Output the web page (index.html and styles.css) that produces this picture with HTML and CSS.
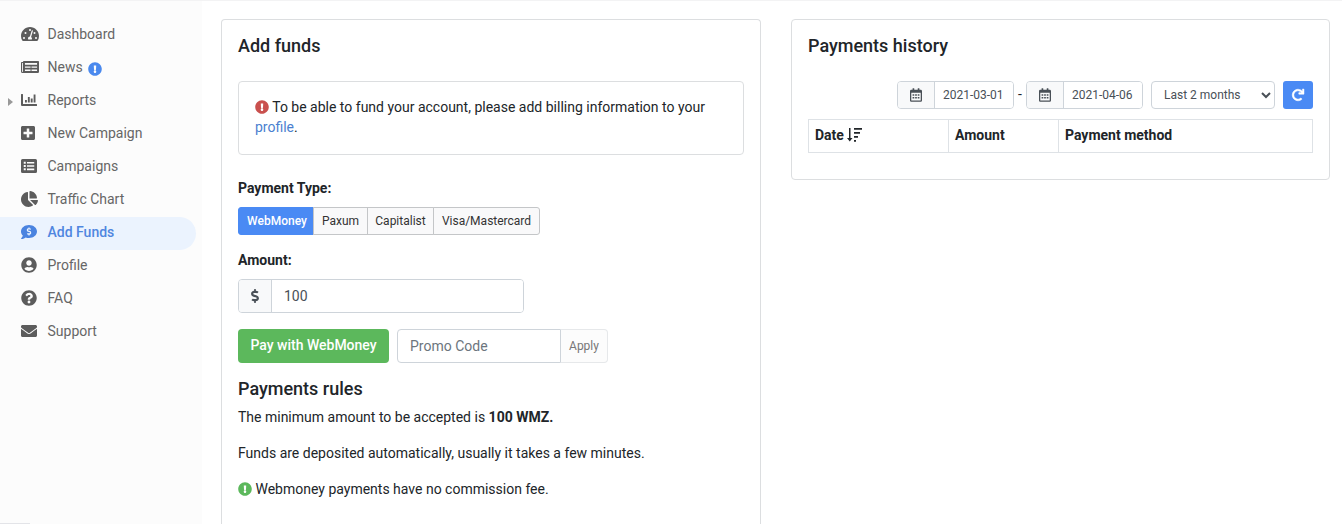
FILE: index.html
```html
<!DOCTYPE html>
<html lang="en">

<head>
    <meta charset="UTF-8">
    <meta name="viewport" content="width=device-width, initial-scale=1.0">
    <title>Add funds</title>
    <link rel="stylesheet" href="styles.css">
</head>

<body>

    <!-- Icons shared by several blocks -->
    <svg class="sprite" xmlns="http://www.w3.org/2000/svg">
        <symbol id="exclamation" viewBox="0 0 512 512">
            <path d="M504 256c0 136.997-111.043 248-248 248S8 392.997 8 256C8 119.083 119.043 8 256 8s248 111.083 248 248zm-248 50c-25.405 0-46 20.595-46 46s20.595 46 46 46 46-20.595 46-46-20.595-46-46-46zm-43.673-165.346l7.418 136c.347 6.364 5.609 11.346 11.982 11.346h48.546c6.373 0 11.635-4.982 11.982-11.346l7.418-136c.375-6.874-5.098-12.654-11.982-12.654h-63.383c-6.884 0-12.356 5.78-11.981 12.654z" />
        </symbol>
        <symbol id="calendar" viewBox="0 0 448 512">
            <path fill-rule="evenodd" d="M96 12q0-12 12-12h40q12 0 12 12v52h128V12q0-12 12-12h40q12 0 12 12v52h48q48 0 48 48v352q0 48-48 48H48q-48 0-48-48V112q0-48 48-48h48zM48 172v286q0 6 6 6h340q6 0 6-6V172zM96 232h64v56H96zm96 0h64v56h-64zm96 0h64v56h-64zM96 328h64v56H96zm96 0h64v56h-64zm96 0h64v56h-64z" />
        </symbol>
        <symbol id="dollar" viewBox="0 0 288 512">
            <path d="M209.2 233.4l-108-31.6C88.7 198.2 80 186.5 80 173.5c0-16.3 13.2-29.5 29.5-29.5h66.3c12.2 0 24.2 3.7 34.2 10.5 6.1 4.1 14.3 3.1 19.5-2l34.8-34c7.1-6.9 6.1-18.4-1.8-24.5C238 74.8 207.4 64.1 176 64V16c0-8.8-7.2-16-16-16h-32c-8.8 0-16 7.2-16 16v48h-2.5C45.8 64-5.4 118.7.5 183.6c4.2 46.1 39.4 83.6 83.8 96.6l102.5 30c12.5 3.7 21.2 15.3 21.2 28.3 0 16.3-13.2 29.5-29.5 29.5h-66.3C100 368 88 364.3 78 357.5c-6.1-4.1-14.3-3.1-19.5 2l-34.8 34c-7.1 6.9-6.1 18.4 1.8 24.5 24.5 19.2 55.1 29.9 86.5 30v48c0 8.8 7.2 16 16 16h32c8.8 0 16-7.2 16-16v-48.2c46.6-.9 90.3-28.6 105.7-72.7 21.5-61.6-14.6-124.8-72.5-141.7z" />
        </symbol>
    </svg>

    <div class="page">
        <nav class="sidebar">
            <a class="nav-item" href="#">
                <svg class="nav-icon w18" viewBox="0 0 576 512"><path fill-rule="evenodd" d="M288 32C129 32 0 161 0 320c0 53 14 102 39 145 6 9 16 15 27 15h444c11 0 21-6 27-15 25-43 39-92 39-145C576 161 447 32 288 32zM288 96a32 32 0 1 1 0 64a32 32 0 0 1 0-64zM96 352a32 32 0 1 1 0 64a32 32 0 0 1 0-64zM144 192a32 32 0 1 1 0 64a32 32 0 0 1 0-64zM480 352a32 32 0 1 1 0 64a32 32 0 0 1 0-64zM432 192a32 32 0 1 1 0 64a32 32 0 0 1 0-64zM367 137q18 5 14 23l-59 188q30 18 30 52 0 18-9 32H233q-9-14-9-32c0-34 27-63 61-64l56-181q6-22 26-18z" /></svg>
                <span>Dashboard</span>
            </a>
            <a class="nav-item" href="#">
                <svg class="nav-icon w18" viewBox="0 0 576 512"><path fill-rule="evenodd" d="M552 64H88q-24 0-24 32H24q-24 0-24 24v280q0 48 48 48h488q40 0 40-40V88q0-24-24-24zM34 128h28v272q0 14-14 14t-14-14zM126 128h388v56H126zM126 240h180v40H126zM336 240h178v40H336zM126 336h180v44H126zM336 336h178v44H336z" /></svg>
                <span>News</span>
                <svg class="news-badge"><use href="#exclamation" /></svg>
            </a>
            <a class="nav-item has-children" href="#">
                <svg class="nav-icon" viewBox="0 0 512 512"><path d="M16 64h32q16 0 16 16v304h432q16 0 16 16v32q0 16-16 16H32q-32 0-32-32V80q0-16 16-16zM128 256h60v80h-60zM220 160h60v176h-60zM312 208h60v128h-60zM404 80h60v256h-60z" /></svg>
                <span>Reports</span>
            </a>
            <a class="nav-item" href="#">
                <svg class="nav-icon w14" viewBox="0 0 448 512"><path d="M400 32H48C21.5 32 0 53.5 0 80v352c0 26.5 21.5 48 48 48h352c26.5 0 48-21.5 48-48V80c0-26.5-21.5-48-48-48zm-32 252c0 6.6-5.4 12-12 12h-92v92c0 6.6-5.4 12-12 12h-56c-6.6 0-12-5.4-12-12v-92H92c-6.6 0-12-5.4-12-12v-56c0-6.6 5.4-12 12-12h92v-92c0-6.6 5.4-12 12-12h56c6.6 0 12 5.4 12 12v92h92c6.6 0 12 5.4 12 12v56z" /></svg>
                <span>New Campaign</span>
            </a>
            <a class="nav-item" href="#">
                <svg class="nav-icon" viewBox="0 0 512 512"><path fill-rule="evenodd" d="M48 32h416q48 0 48 48v352q0 48-48 48H48q-48 0-48-48V80q0-48 48-48zM88 120v64h64v-64zM192 124v52h232v-52zM88 224v64h64v-64zM192 230v52h232v-52zM88 328v64h64v-64zM192 336v52h232v-52z" /></svg>
                <span>Campaigns</span>
            </a>
            <a class="nav-item" href="#">
                <svg class="nav-icon w17" viewBox="0 0 544 512"><path d="M527.79 288H290.5l158.03 158.03c6.04 6.04 15.98 6.53 22.19.68 38.7-36.46 65.32-85.61 73.13-140.86 1.34-9.46-6.51-17.85-16.06-17.85zm-15.83-64.8C503.72 103.74 408.26 8.28 288.8.04 279.68-.59 272 7.1 272 16.24V240h223.77c9.14 0 16.82-7.68 16.19-16.8zM224 288V50.71c0-9.55-8.39-17.4-17.84-16.06C86.99 51.49-4.1 155.6.14 280.37 4.5 408.51 114.83 513.59 243.03 511.98c50.4-.63 96.97-16.87 135.26-44.03 7.9-5.6 8.42-17.23 1.57-24.08L224 288z" /></svg>
                <span>Traffic Chart</span>
            </a>
            <a class="nav-item active" href="#">
                <svg class="nav-icon" viewBox="0 0 512 512">
                    <path d="M256 32C114.6 32 0 125.1 0 240c0 49.6 21.4 95 57 130.7C44.5 421.1 2.7 466 2.2 466.5c-2.2 2.3-2.8 5.7-1.5 8.7S4.8 480 8 480c66.3 0 116-31.8 140.6-51.4 32.7 12.3 69 19.4 107.4 19.4 141.4 0 256-93.1 256-208S397.4 32 256 32z" />
                    <use class="cutout" href="#dollar" x="176" y="104" width="160" height="270" />
                </svg>
                <span>Add Funds</span>
            </a>
            <a class="nav-item" href="#">
                <svg class="nav-icon" viewBox="0 0 496 512"><path d="M248 8C111 8 0 119 0 256s111 248 248 248 248-111 248-248S385 8 248 8zm0 96c48.6 0 88 39.4 88 88s-39.4 88-88 88-88-39.4-88-88 39.4-88 88-88zm0 344c-58.7 0-111.3-26.6-146.5-68.2 18.8-35.4 55.6-59.8 98.5-59.8 2.4 0 4.8.4 7.1 1.1 13 4.2 26.6 6.9 40.9 6.9 14.3 0 28-2.7 40.9-6.9 2.3-.7 4.7-1.1 7.1-1.1 42.9 0 79.7 24.4 98.5 59.8C359.3 421.4 306.7 448 248 448z" /></svg>
                <span>Profile</span>
            </a>
            <a class="nav-item" href="#">
                <svg class="nav-icon" viewBox="0 0 512 512"><path d="M504 256c0 136.997-111.043 248-248 248S8 392.997 8 256C8 119.083 119.043 8 256 8s248 111.083 248 248zM262.655 90c-54.497 0-89.255 22.957-116.549 63.758-3.536 5.286-2.353 12.415 2.715 16.258l34.699 26.31c5.205 3.947 12.621 3.008 16.665-2.122 17.864-22.658 30.113-35.797 57.303-35.797 20.429 0 45.698 13.148 45.698 32.958 0 14.976-12.363 22.667-32.534 33.976C247.128 238.528 216 254.941 216 296v4c0 6.627 5.373 12 12 12h56c6.627 0 12-5.373 12-12v-1.333c0-28.462 83.186-29.647 83.186-106.667 0-58.002-60.165-102-116.531-102zM256 338c-25.365 0-46 20.635-46 46 0 25.364 20.635 46 46 46s46-20.636 46-46c0-25.365-20.635-46-46-46z" /></svg>
                <span>FAQ</span>
            </a>
            <a class="nav-item" href="#">
                <svg class="nav-icon" viewBox="0 0 512 512"><path d="M502.3 190.8c3.9-3.1 9.7-.2 9.7 4.7V400c0 26.5-21.5 48-48 48H48c-26.5 0-48-21.5-48-48V195.6c0-5 5.7-7.8 9.7-4.7 22.4 17.4 52.1 39.5 154.1 113.6 21.1 15.4 56.7 47.8 92.2 47.6 35.7.3 72-32.8 92.3-47.6 102-74.1 131.6-96.3 154-113.7zM256 320c23.2.4 56.6-29.2 73.4-41.4 132.7-96.3 142.8-104.7 173.4-128.7 5.8-4.5 9.2-11.5 9.2-18.9v-19c0-26.5-21.5-48-48-48H48c-26.5 0-48 21.5-48 48v19c0 7.4 3.4 14.3 9.2 18.9 30.6 23.9 40.7 32.4 173.4 128.7 16.8 12.2 50.2 41.8 73.4 41.4z" /></svg>
                <span>Support</span>
            </a>
        </nav>

        <main class="content">
            <section class="card card-funds">
                <h2>Add funds</h2>

                <div class="notice">
                    <svg class="text-icon danger"><use href="#exclamation" /></svg>
                    To be able to fund your account, please add billing information to your <a href="#">profile</a>.
                </div>

                <div class="label">Payment Type:</div>
                <div class="btn-group">
                    <button type="button" class="selected">WebMoney</button>
                    <button type="button" class="paxum">Paxum</button>
                    <button type="button" class="capitalist">Capitalist</button>
                    <button type="button" class="visa">Visa/Mastercard</button>
                </div>

                <label class="label" for="amount">Amount:</label>
                <div class="input-group amount-group">
                    <span class="addon"><svg class="dollar-icon"><use href="#dollar" /></svg></span>
                    <input type="text" id="amount" value="100">
                </div>

                <div class="pay-row">
                    <button type="button" class="btn-pay">Pay with WebMoney</button>
                    <div class="promo-group">
                        <input type="text" placeholder="Promo Code">
                        <button type="button" class="btn-apply">Apply</button>
                    </div>
                </div>

                <h2 class="rules-title">Payments rules</h2>
                <p>The minimum amount to be accepted is <b>100 WMZ.</b></p>
                <p>Funds are deposited automatically, usually it takes a few minutes.</p>
                <p><svg class="text-icon success"><use href="#exclamation" /></svg> Webmoney payments have no commission fee.</p>
            </section>

            <section class="card card-history">
                <h2>Payments history</h2>

                <div class="filters">
                    <div class="input-group date-group">
                        <span class="addon"><svg class="calendar-icon"><use href="#calendar" /></svg></span>
                        <input type="text" value="2021-03-01">
                    </div>
                    <span class="dash">-</span>
                    <div class="input-group date-group">
                        <span class="addon"><svg class="calendar-icon"><use href="#calendar" /></svg></span>
                        <input type="text" value="2021-04-06">
                    </div>
                    <select class="period">
                        <option>Last 2 months</option>
                    </select>
                    <button type="button" class="btn-refresh">
                        <svg viewBox="0 0 512 512"><path d="M500.33 0h-47.41a12 12 0 0 0-12 12.57l4 82.76A247.42 247.42 0 0 0 256 8C119.34 8 7.9 119.53 8 256.19 8.1 393.07 119.1 504 256 504a247.1 247.1 0 0 0 166.18-63.91 12 12 0 0 0 .48-17.43l-34-34a12 12 0 0 0-16.38-.55A176 176 0 1 1 402.1 157.8l-101.53-4.87a12 12 0 0 0-12.57 12v47.41a12 12 0 0 0 12 12h200.33a12 12 0 0 0 12-12V12a12 12 0 0 0-12-12z" /></svg>
                    </button>
                </div>

                <table class="history">
                    <tr>
                        <th class="col-date">Date <svg class="sort-icon" viewBox="0 0 15 14"><path d="M2 0h1.5v10h2L2.75 13.5 0 10h2zM7 0h8v1.8H7zM7 4h6v1.8H7zM7 8h4v1.8H7zM7 12h2v1.8H7z" /></svg></th>
                        <th class="col-amount">Amount</th>
                        <th>Payment method</th>
                    </tr>
                </table>
            </section>
        </main>
    </div>

    <div class="status-line"></div>

</body>

</html>
```
FILE: styles.css
```css
* {
    box-sizing: border-box;
}

body {
    margin: 0;
    height: 524px;
    overflow: hidden;
    background-color: #fff;
    color: #212529;
    font-family: Roboto, "Liberation Sans", sans-serif;
    font-size: 14px;
    line-height: 20px;
}

input,
button,
select {
    margin: 0;
    font-family: inherit;
}

a {
    color: #4b7fd0;
    text-decoration: none;
}

svg {
    fill: currentColor;
}

.sprite {
    display: none;
}

.page {
    display: flex;
    height: 524px;
    border-top: 1px solid #f3f3f4;
}

/* Sidebar */
.sidebar {
    width: 202px;
    flex-shrink: 0;
    padding-top: 18px;
    background-color: #fcfcfc;
}

.nav-item {
    display: flex;
    align-items: center;
    width: 196px;
    height: 33px;
    padding-left: 21px;
    padding-bottom: 3px;
    border-radius: 0 17px 17px 0;
    color: #666;
}

.nav-item span {
    margin-left: 10.5px;
    padding-bottom: 1px;
}

.nav-icon {
    width: 16px;
    height: 16px;
    color: #5c5c5c;
}

.nav-icon.w14 {
    width: 14px;
    margin-right: 2px;
}

.nav-icon.w17 {
    width: 17px;
    margin-right: -1px;
}

.nav-icon.w18 {
    width: 18px;
    margin-right: -2px;
}

.nav-item.active {
    background-color: #ebf3fe;
    color: #4f86e0;
    font-weight: 500;
}

.active .nav-icon {
    color: #4a83e0;
}

.cutout {
    fill: #ebf3fe;
}

.news-badge {
    width: 14px;
    height: 14px;
    margin: 3px 0 0 5px;
    color: #4a89ee;
}

/* Arrow of the collapsed submenu */
.has-children {
    padding-left: 8px;
}

.has-children::before {
    content: "";
    margin-top: 4px;
    margin-right: 8px;
    border: 4px solid transparent;
    border-left: 5px solid #999;
    border-right: 0;
}

/* Cards */
.content {
    display: flex;
    flex: 1;
    align-items: flex-start;
    gap: 30px;
    padding: 18px 12px 0 19px;
}

.card {
    border: 1px solid #dcdee0;
    border-radius: 4px;
    padding: 16px;
}

.card-funds {
    width: 540px;
    height: 505px;
    border-bottom: 0;
    border-radius: 4px 4px 0 0;
}

.card-history {
    width: 539px;
    height: 161px;
}

h2 {
    margin: 0;
    font-size: 18px;
    font-weight: 500;
    line-height: 20px;
}

.notice {
    height: 74px;
    margin-top: 25px;
    padding: 15px 16px;
    border: 1px solid #dcdee0;
    border-radius: 4px;
}

.text-icon {
    width: 14px;
    height: 14px;
    vertical-align: -2px;
}

.danger {
    color: #c9504e;
}

.success {
    color: #5cb85c;
}

.label {
    display: block;
    margin-top: 23px;
    font-weight: 700;
}

.btn-group {
    display: flex;
    margin-top: 9px;
}

.btn-group button {
    height: 28px;
    padding: 0 0 1px;
    margin-left: -1px;
    border: 1px solid #c4c6c8;
    background-color: #f9f9fa;
    color: #333;
    font-size: 12px;
}

.btn-group .selected {
    width: 76px;
    margin-left: 0;
    padding-left: 2px;
    border-color: #4a8af4;
    border-radius: 3px 0 0 3px;
    background-color: #4a8af4;
    color: #fff;
    font-weight: 500;
}

.btn-group .paxum {
    width: 55px;
}

.btn-group .capitalist {
    width: 67px;
}

.btn-group .visa {
    width: 107px;
    border-radius: 0 3px 3px 0;
}

.btn-group + .label {
    margin-top: 15px;
}

.input-group {
    display: flex;
    border: 1px solid #ced4da;
    border-radius: 4px;
    overflow: hidden;
}

.input-group input {
    min-width: 0;
    flex: 1;
    border: 0;
    outline: none;
    padding: 0 12px;
    color: #495057;
    font-size: 14px;
}

.addon {
    display: flex;
    align-items: center;
    justify-content: center;
    border-right: 1px solid #ced4da;
    background-color: #f8f9fa;
    color: #495057;
}

.amount-group {
    width: 286px;
    height: 34px;
    margin-top: 9px;
}

.amount-group .addon {
    width: 33px;
}

.dollar-icon {
    width: 8px;
    height: 14px;
}

.pay-row {
    display: flex;
    gap: 8px;
    margin-top: 16px;
}

.btn-pay {
    width: 151px;
    height: 34px;
    padding: 0 0 2px;
    border: 0;
    border-radius: 4px;
    background-color: #5cb85c;
    color: #fff;
    font-size: 14px;
    font-weight: 500;
}

.promo-group {
    display: flex;
    width: 211px;
    height: 34px;
}

.promo-group input {
    width: 164px;
    padding: 0 12px;
    border: 1px solid #ced4da;
    border-radius: 4px 0 0 4px;
    outline: none;
    font-size: 14px;
}

.promo-group input::placeholder {
    color: #6c757d;
}

.btn-apply {
    width: 47px;
    padding: 0;
    border: 1px solid #e6e8ea;
    border-left: 0;
    border-radius: 0 4px 4px 0;
    background-color: #fcfcfc;
    color: #777;
    font-size: 12px;
}

.rules-title {
    margin-top: 16px;
    margin-bottom: 8px;
}

p {
    margin: 0 0 16px;
}

/* History filters */
.filters {
    display: flex;
    justify-content: flex-end;
    margin-top: 25px;
}

.date-group {
    width: 117px;
    height: 28px;
}

.date-group .addon {
    width: 37px;
}

.date-group input {
    padding: 0 8px;
    font-size: 12px;
}

.calendar-icon {
    width: 12px;
    height: 14px;
}

.dash {
    width: 12px;
    line-height: 26px;
    text-align: center;
}

.period {
    width: 124px;
    height: 28px;
    margin: 0 8px;
    padding: 0 8px;
    border: 1px solid #ced4da;
    border-radius: 4px;
    background-color: #fff;
    color: #495057;
    font-size: 12px;
}

.btn-refresh {
    display: flex;
    align-items: center;
    justify-content: center;
    width: 30px;
    height: 28px;
    padding: 0 0 1px;
    border: 0;
    border-radius: 3px;
    background-color: #4a8af4;
    color: #fff;
}

.btn-refresh svg {
    width: 12px;
    height: 12px;
    stroke: #fff;
    stroke-width: 20;
    overflow: visible;
}

.history {
    width: 505px;
    margin-top: 10px;
    border-collapse: collapse;
    table-layout: fixed;
}

.history th {
    height: 33px;
    padding: 0 6px 2px;
    border: 1px solid #dee2e6;
    font-weight: 700;
    text-align: left;
}

.col-date {
    width: 140px;
}

.col-amount {
    width: 110px;
}

.sort-icon {
    width: 15px;
    height: 14px;
    vertical-align: -2px;
}

/* Edge of the link hint at the bottom of the window */
.status-line {
    position: fixed;
    left: 0;
    bottom: 0;
    width: 30px;
    height: 1px;
    background-color: #e3e4e8;
}
```
